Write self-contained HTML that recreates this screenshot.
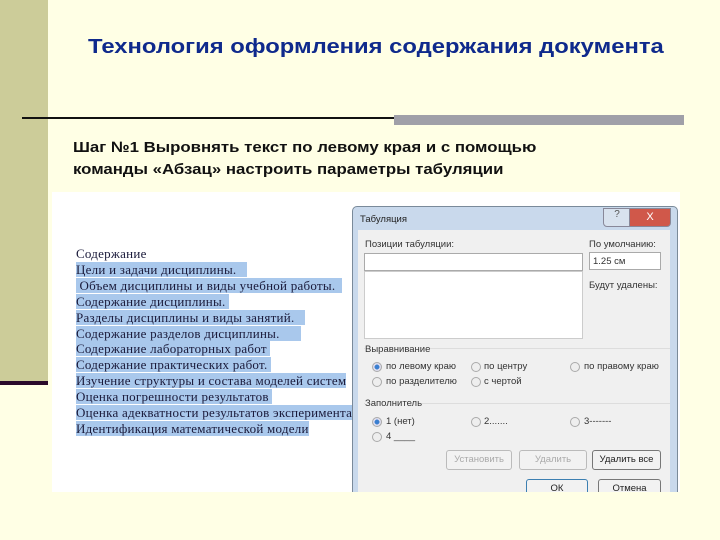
<!DOCTYPE html>
<html><head><meta charset="utf-8"><style>
body{margin:0;width:720px;height:540px;background:#FFFFE5;position:relative;overflow:hidden;font-family:"Liberation Sans",sans-serif}
.a{position:absolute}
.ser{font-family:"Liberation Serif",serif;font-size:13px;line-height:15.9px;color:#1a1a3a;letter-spacing:0.25px}
.hl{background:#A9C8EC}
.d{font-size:9.5px;color:#333;position:absolute;white-space:nowrap}
.rb{position:absolute;width:8px;height:8px;border-radius:50%;border:1px solid #aaa;background:#eee}
.rb.on{background:radial-gradient(#3a7fd0 40%,#dde 45%)}
.btn{position:absolute;height:18px;border:1px solid #bbb;border-radius:3px;background:#f2f2f2;font-size:9.5px;color:#aaa;text-align:center;line-height:18px}
</style></head><body>
<div class="a" style="left:0;top:0;width:48px;height:381px;background:#CCCC99"></div>
<div class="a" style="left:0;top:381px;width:48px;height:4px;background:#2a0a2a"></div>
<div class="a" style="left:88px;top:36px;font-size:20px;font-weight:bold;color:#0f2a8c;white-space:nowrap;transform-origin:0 0;transform:scaleX(1.19)">Технология оформления содержания документа</div>
<div class="a" style="left:22px;top:117px;width:372px;height:2px;background:#111"></div>
<div class="a" style="left:394px;top:115px;width:290px;height:10px;background:#A0A0A8"></div>
<div class="a" style="left:73px;top:137px;font-size:15px;font-weight:bold;line-height:22px;color:#111;white-space:nowrap;transform-origin:0 0;transform:scaleX(1.12)">Шаг №1 Выровнять текст по левому края и с помощью<br>команды «Абзац» настроить параметры табуляции</div>
<div class="a" style="left:52px;top:192px;width:628px;height:300px;background:#fff;overflow:hidden">
<div class="a ser" style="left:24px;top:54px">
<div>Содержание</div>
<div><span class="hl">Цели и задачи дисциплины.&nbsp;&nbsp;&nbsp;</span></div>
<div><span class="hl">&nbsp;Объем дисциплины и виды учебной работы.&nbsp;&nbsp;</span></div>
<div><span class="hl">Содержание дисциплины.&nbsp;</span></div>
<div><span class="hl">Разделы дисциплины и виды занятий.&nbsp;&nbsp;&nbsp;</span></div>
<div><span class="hl">Содержание разделов дисциплины.&nbsp;&nbsp;&nbsp;&nbsp;&nbsp;&nbsp;</span></div>
<div><span class="hl">Содержание лабораторных работ&nbsp;</span></div>
<div><span class="hl">Содержание практических работ.&nbsp;</span></div>
<div><span class="hl" style="white-space:nowrap">Изучение структуры и состава моделей систем</span></div>
<div><span class="hl">Оценка погрешности результатов&nbsp;</span></div>
<div><span class="hl" style="white-space:nowrap">Оценка адекватности результатов эксперимента</span></div>
<div><span class="hl">Идентификация математической модели</span></div>
</div>
<div class="a" style="left:300px;top:14px;width:324px;height:300px;background:#C9D9EC;border:1px solid #7a8a9a;border-radius:5px 5px 0 0">
<div class="d" style="left:7px;top:7px;color:#222">Табуляция</div>
<div class="a" style="left:250px;top:1px;width:26px;height:17px;background:#d8e2ee;border:1px solid #889;border-radius:0 0 0 4px;font-size:10px;text-align:center;color:#555">?</div>
<div class="a" style="left:276px;top:1px;width:40px;height:17px;background:#D0584A;border:1px solid #889;border-radius:0 0 4px 0;color:#fff;font-size:11px;text-align:center;line-height:17px">X</div>
<div class="a" style="left:5px;top:23px;width:312px;height:280px;background:#F0F0F0"></div>
</div>
</div>
<div class="a" style="left:0;top:0;width:680px;height:492px;overflow:hidden">
<div class="d" style="left:365px;top:239px">Позиции табуляции:</div>
<div class="d" style="left:589px;top:239px">По умолчанию:</div>
<div class="a" style="left:364px;top:253px;width:217px;height:16px;background:#fff;border:1px solid #aaa"></div>
<div class="a" style="left:589px;top:252px;width:70px;height:16px;background:#fff;border:1px solid #aaa"></div>
<div class="d" style="left:593px;top:256px">1.25 см</div>
<div class="a" style="left:364px;top:271px;width:217px;height:66px;background:#fff;border:1px solid #ccc"></div>
<div class="d" style="left:589px;top:280px">Будут удалены:</div>
<div class="a" style="left:364px;top:348px;width:306px;height:1px;background:#ddd"></div>
<div class="d" style="left:365px;top:344px;background:#F0F0F0">Выравнивание</div>
<div class="rb on" style="left:372px;top:362px"></div><div class="d" style="left:386px;top:361px">по левому краю</div>
<div class="rb" style="left:471px;top:362px"></div><div class="d" style="left:484px;top:361px">по центру</div>
<div class="rb" style="left:570px;top:362px"></div><div class="d" style="left:584px;top:361px">по правому краю</div>
<div class="rb" style="left:372px;top:377px"></div><div class="d" style="left:386px;top:376px">по разделителю</div>
<div class="rb" style="left:471px;top:377px"></div><div class="d" style="left:484px;top:376px">с чертой</div>
<div class="a" style="left:364px;top:403px;width:306px;height:1px;background:#ddd"></div>
<div class="d" style="left:365px;top:398px;background:#F0F0F0">Заполнитель</div>
<div class="rb on" style="left:372px;top:417px"></div><div class="d" style="left:386px;top:416px">1 (нет)</div>
<div class="rb" style="left:471px;top:417px"></div><div class="d" style="left:484px;top:416px">2.......</div>
<div class="rb" style="left:570px;top:417px"></div><div class="d" style="left:584px;top:416px">3-------</div>
<div class="rb" style="left:372px;top:432px"></div><div class="d" style="left:386px;top:431px">4 ____</div>
<div class="btn" style="left:446px;top:450px;width:64px">Установить</div>
<div class="btn" style="left:519px;top:450px;width:66px">Удалить</div>
<div class="btn" style="left:592px;top:450px;width:67px;color:#222;border-color:#777">Удалить все</div>
<div class="btn" style="left:526px;top:479px;width:60px;color:#222;border-color:#3c7fb1">ОК</div>
<div class="btn" style="left:598px;top:479px;width:61px;color:#222;border-color:#777">Отмена</div>
</div>
</body></html>
